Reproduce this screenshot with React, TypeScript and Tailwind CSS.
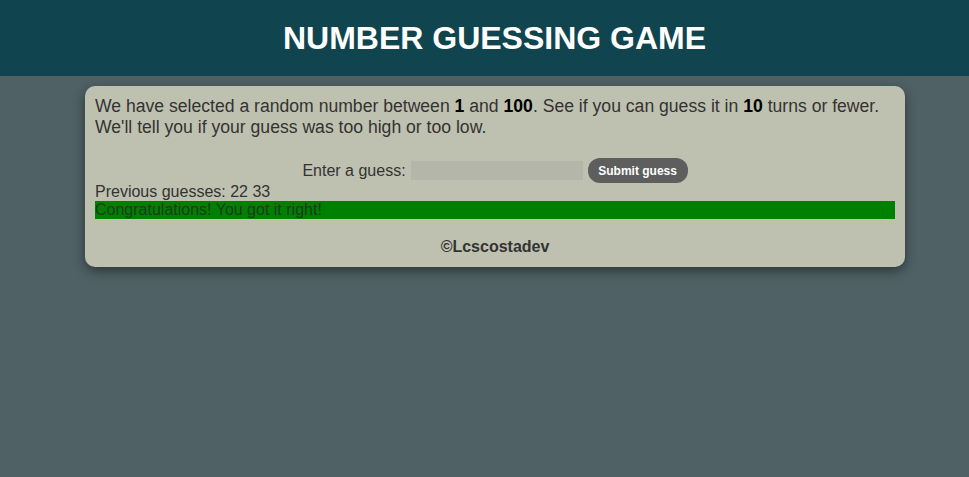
export default function App() {
  return (
    <div className="min-h-[477px] bg-[#4f6165] font-['Liberation_Sans',Arial,sans-serif] text-[#333]">
      <header className="h-[76px] bg-[#10454f] flex items-center justify-center pl-[20px]">
        <h1 className="text-[32px] font-bold text-white leading-none -mt-[1px]">NUMBER GUESSING GAME</h1>
      </header>
      <div className="pt-[10px] pl-[85px]">
        <div className="w-[820px] bg-[#bfc1b0] rounded-[10px] shadow-[0_4px_12px_rgba(0,0,0,0.45)] px-[10px] pt-[10px] pb-[11px]">
          <p className="text-[17.6px] leading-[21px]">
            We have selected a random number between <b className="text-black">1</b> and <b className="text-black">100</b>. See if you can guess it in <b className="text-black">10</b> turns or fewer. We'll tell you if your guess was too high or too low.
          </p>
          <div className="mt-[20px] h-[25px] flex items-center justify-center">
            <label className="text-[16px] leading-[18px]">Enter a guess:</label>
            <div className="ml-[5px] w-[172px] h-[19px] bg-[#b5b6aa]" />
            <button className="ml-[5px] w-[100px] h-[25px] rounded-[12px] bg-[#5e5e5e] text-white text-[12px] font-bold">Submit guess</button>
          </div>
          <div className="text-[16px] leading-[18px]">Previous guesses: 22 33</div>
          <div className="bg-[#008000] text-[16px] leading-[18px] text-[#1f3a1f]">Congratulations! You got it right!</div>
          <div className="mt-[19px] text-center text-[16px] leading-[18px] font-bold">©Lcscostadev</div>
        </div>
      </div>
    </div>
  );
}
